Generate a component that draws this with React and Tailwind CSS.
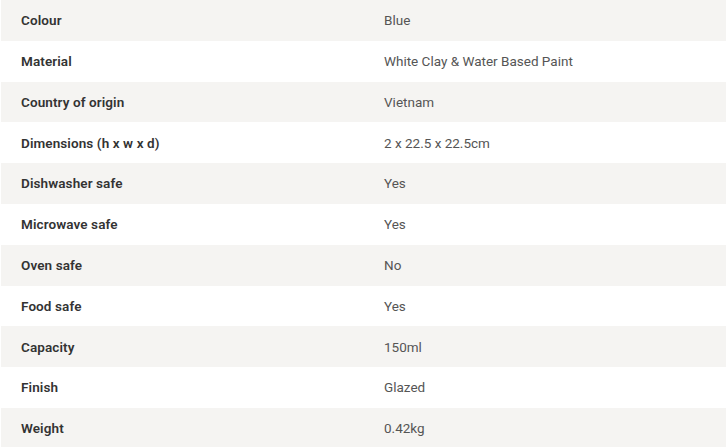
const SPECS = [
    ["Colour", "Blue"],
    ["Material", "White Clay & Water Based Paint"],
    ["Country of origin", "Vietnam"],
    ["Dimensions (h x w x d)", "2 x 22.5 x 22.5cm"],
    ["Dishwasher safe", "Yes"],
    ["Microwave safe", "Yes"],
    ["Oven safe", "No"],
    ["Food safe", "Yes"],
    ["Capacity", "150ml"],
    ["Finish", "Glazed"],
    ["Weight", "0.42kg"],
];

export default function App() {
    return (
        <div className="w-[726px] h-[447px] overflow-hidden bg-white pl-px" style={{ fontFamily: "Roboto, 'Liberation Sans', sans-serif" }}>
            {SPECS.map(([label, value], i) => (
                <div
                    key={label}
                    className={`flex h-[40.8px] items-center text-[13.5px] ${i % 2 === 0 ? "bg-[#f5f4f2]" : "bg-white"}`}
                >
                    <div className="w-[363px] pl-5 font-semibold tracking-[0.1px] text-[#333]">{label}</div>
                    <div className="flex-1 pl-5 text-[#555]">{value}</div>
                </div>
            ))}
        </div>
    );
}
